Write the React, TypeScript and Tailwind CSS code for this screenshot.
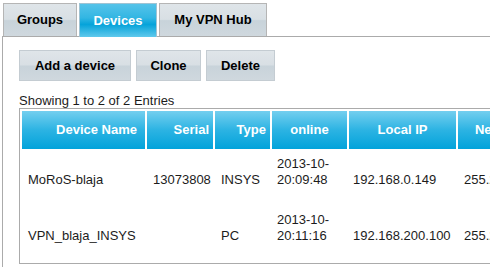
const tabs = [
  { label: "Groups", width: "w-[74px]", active: false },
  { label: "Devices", width: "w-[78px]", active: true },
  { label: "My VPN Hub", width: "w-[108px]", active: false },
];

const headers = [
  { label: "Device Name", className: "w-[123px] text-right pr-[8px]" },
  { label: "Serial", className: "w-[66px] text-right pr-[4px]" },
  { label: "Type", className: "w-[55px] text-right pr-[4px]" },
  { label: "online", className: "w-[75px] text-center" },
  { label: "Local IP", className: "w-[107px] text-center" },
  { label: "Netmask", className: "w-[88px] text-center" },
  { label: "Gateway", className: "w-[100px] text-center" },
];

const devices = [
  {
    name: "MoRoS-blaja",
    serial: "13073808",
    type: "INSYS",
    date: "2013-10-",
    time: "20:09:48",
    ip: "192.168.0.149",
    mask: "255.255.255.0",
    gw: "192.168.0.1",
  },
  {
    name: "VPN_blaja_INSYS",
    serial: "",
    type: "PC",
    date: "2013-10-",
    time: "20:11:16",
    ip: "192.168.200.100",
    mask: "255.255.255.0",
    gw: "",
  },
];

const grayGrad =
  "bg-[linear-gradient(#dfe5e9_0%,#d8dfe4_48%,#c8d3da_52%,#cfd8de_100%)]";

export default function App() {
  return (
    <div className="w-[490px] h-[267px] overflow-hidden bg-white font-['Liberation_Sans',Arial,sans-serif] text-[13px] text-[#1c1c1c]">
      {/* tabs */}
      <div className="flex gap-[2px] pl-[3px] pt-[3px]">
        {tabs.map((t) =>
          t.active ? (
            <div
              key={t.label}
              className={`${t.width} relative z-10 -mb-px h-[34px] flex items-center justify-center border border-b-0 border-[#9fc3d3] bg-[linear-gradient(#55c3e9_0%,#32b6e3_42%,#05a3da_62%,#60c9ec_100%)] font-bold text-white`}
            >
              {t.label}
            </div>
          ) : (
            <div
              key={t.label}
              className={`${t.width} h-[33px] flex items-center justify-center border border-b-0 border-[#b5b5b5] ${grayGrad} font-bold text-black`}
            >
              {t.label}
            </div>
          )
        )}
      </div>

      {/* panel */}
      <div className="ml-[2px] h-[240px] border-l border-t border-[#ababab] pl-[16px] pt-[13px]">
        <div className="flex gap-[5px]">
          <button className={`w-[112px] h-[31px] border border-[#c4ccd2] ${grayGrad} font-bold text-black`}>
            Add a device
          </button>
          <button className={`w-[65px] h-[31px] border border-[#c4ccd2] ${grayGrad} font-bold text-black`}>
            Clone
          </button>
          <button className={`w-[69px] h-[31px] border border-[#c4ccd2] ${grayGrad} font-bold text-black`}>
            Delete
          </button>
        </div>

        <div className="mt-[12px] leading-[15px]">Showing 1 to 2 of 2 Entries</div>

        <table className="w-[632px] table-fixed border border-[#ababab] border-separate border-spacing-[2px]">
          <thead>
            <tr>
              {headers.map((h) => (
                <th
                  key={h.label}
                  className={`${h.className} h-[38px] bg-[linear-gradient(#74cfef_0%,#2cb3e3_50%,#02a3da_100%)] font-bold text-white whitespace-nowrap overflow-hidden`}
                >
                  {h.label}
                </th>
              ))}
            </tr>
          </thead>
          <tbody>
            {devices.map((d) => (
              <tr key={d.name} className="h-[54px] align-bottom leading-[16px]">
                <td className="pl-[6px] pb-[17px]">{d.name}</td>
                <td className="pl-[6px] pb-[17px]">{d.serial}</td>
                <td className="pl-[6px] pb-[17px]">{d.type}</td>
                <td className="pl-[5px] pb-[17px]">
                  {d.date}
                  <br />
                  {d.time}
                </td>
                <td className="pl-[4px] pb-[17px] whitespace-nowrap">{d.ip}</td>
                <td className="pl-[6px] pb-[17px] whitespace-nowrap">{d.mask}</td>
                <td className="pl-[6px] pb-[17px] whitespace-nowrap">{d.gw}</td>
              </tr>
            ))}
          </tbody>
        </table>
      </div>
    </div>
  );
}
